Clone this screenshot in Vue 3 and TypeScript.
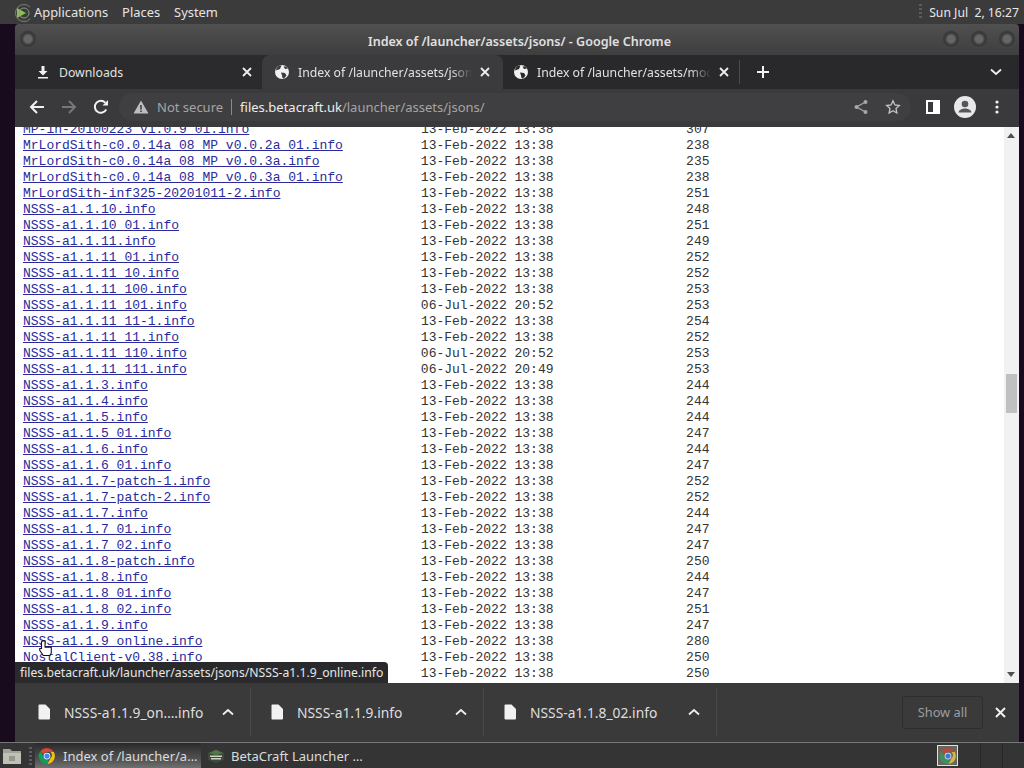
<script setup lang="ts">
interface Row { name: string; date?: string; size: number }

const base = '13-Feb-2022 13:38'
const clock = 'Sun Jul  2, 16:27'
const rows: Row[] = [
  { name: 'MP-in-20100223_v1.0.9_01.info', size: 307 },
  { name: 'MrLordSith-c0.0.14a_08_MP_v0.0.2a_01.info', size: 238 },
  { name: 'MrLordSith-c0.0.14a_08_MP_v0.0.3a.info', size: 235 },
  { name: 'MrLordSith-c0.0.14a_08_MP_v0.0.3a_01.info', size: 238 },
  { name: 'MrLordSith-inf325-20201011-2.info', size: 251 },
  { name: 'NSSS-a1.1.10.info', size: 248 },
  { name: 'NSSS-a1.1.10_01.info', size: 251 },
  { name: 'NSSS-a1.1.11.info', size: 249 },
  { name: 'NSSS-a1.1.11_01.info', size: 252 },
  { name: 'NSSS-a1.1.11_10.info', size: 252 },
  { name: 'NSSS-a1.1.11_100.info', size: 253 },
  { name: 'NSSS-a1.1.11_101.info', date: '06-Jul-2022 20:52', size: 253 },
  { name: 'NSSS-a1.1.11_11-1.info', size: 254 },
  { name: 'NSSS-a1.1.11_11.info', size: 252 },
  { name: 'NSSS-a1.1.11_110.info', date: '06-Jul-2022 20:52', size: 253 },
  { name: 'NSSS-a1.1.11_111.info', date: '06-Jul-2022 20:49', size: 253 },
  { name: 'NSSS-a1.1.3.info', size: 244 },
  { name: 'NSSS-a1.1.4.info', size: 244 },
  { name: 'NSSS-a1.1.5.info', size: 244 },
  { name: 'NSSS-a1.1.5_01.info', size: 247 },
  { name: 'NSSS-a1.1.6.info', size: 244 },
  { name: 'NSSS-a1.1.6_01.info', size: 247 },
  { name: 'NSSS-a1.1.7-patch-1.info', size: 252 },
  { name: 'NSSS-a1.1.7-patch-2.info', size: 252 },
  { name: 'NSSS-a1.1.7.info', size: 244 },
  { name: 'NSSS-a1.1.7_01.info', size: 247 },
  { name: 'NSSS-a1.1.7_02.info', size: 247 },
  { name: 'NSSS-a1.1.8-patch.info', size: 250 },
  { name: 'NSSS-a1.1.8.info', size: 244 },
  { name: 'NSSS-a1.1.8_01.info', size: 247 },
  { name: 'NSSS-a1.1.8_02.info', size: 251 },
  { name: 'NSSS-a1.1.9.info', size: 247 },
  { name: 'NSSS-a1.1.9_online.info', size: 280 },
  { name: 'NostalClient-v0.38.info', size: 250 },
  { name: '', size: 250 },
]

function rest(r: Row): string {
  const pad = ' '.repeat(51 - r.name.length)
  return pad + (r.date ?? base) + String(r.size).padStart(20, ' ')
}

const downloads = ['NSSS-a1.1.9_on….info', 'NSSS-a1.1.9.info', 'NSSS-a1.1.8_02.info']
</script>

<template>
  <div class="desktop">
    <header class="panel">
      <svg class="menu-logo" width="22" height="22" viewBox="0 0 22 22">
        <path d="M9 7 18 12 9 17Z" fill="#8cc152" />
        <circle cx="16" cy="12" r="5" fill="none" stroke="#8f9a80" stroke-width="1" />
        <circle cx="16" cy="12" r="8.500" fill="none" stroke="#7b8270" stroke-width="1" />
      </svg>
      <span class="panel-item first">Applications</span>
      <span class="panel-item">Places</span>
      <span class="panel-item">System</span>
      <span class="spacer"></span>
      <span class="handle"></span>
      <span class="clock">{{ clock }}</span>
    </header>

    <div class="window-area">
      <main class="window">
        <div class="titlebar">
          <span class="wm-btn"></span>
          <span class="title">Index of /launcher/assets/jsons/ - Google Chrome</span>
          <div class="wm-group">
            <span class="wm-btn"></span>
            <span class="wm-btn"></span>
            <span class="wm-btn"></span>
          </div>
        </div>

        <div class="tabstrip">
          <div class="tab tab-dl">
            <svg class="tab-icon" width="16" height="16" viewBox="0 0 16 16">
              <path d="M6.500 2h3v5h3L8 11.500 3.500 7h3ZM3 13h10v1.500H3Z" fill="#f1f1f1" />
            </svg>
            <span class="tab-label">Downloads</span>
            <svg class="tab-x" width="10" height="10" viewBox="0 0 10 10"><path d="M1 1 9 9M9 1 1 9" stroke="#eee" stroke-width="1.800" /></svg>
          </div>
          <div class="tab tab-active">
            <svg class="tab-icon" width="16" height="16" viewBox="0 0 16 16">
              <circle cx="8" cy="8" r="7" fill="#f1f1f1" />
              <path d="M2 6.500 6 5l1.500-3.500L5 1.500 2.500 4ZM7 8.500l4 .5 1.500 2.500L10 14.500 8.500 14 8 11.500ZM9.500 2.500 11 5l3-.5L12 2.500Z" fill="#3b3b3d" />
            </svg>
            <span class="tab-label fade">Index of /launcher/assets/jsons/</span>
            <svg class="tab-x" width="10" height="10" viewBox="0 0 10 10"><path d="M1 1 9 9M9 1 1 9" stroke="#eee" stroke-width="1.800" /></svg>
          </div>
          <div class="tab tab-third">
            <svg class="tab-icon" width="16" height="16" viewBox="0 0 16 16">
              <circle cx="8" cy="8" r="7" fill="#f1f1f1" />
              <path d="M2 6.500 6 5l1.500-3.500L5 1.500 2.500 4ZM7 8.500l4 .5 1.500 2.500L10 14.500 8.500 14 8 11.500ZM9.500 2.500 11 5l3-.5L12 2.500Z" fill="#29292b" />
            </svg>
            <span class="tab-label fade">Index of /launcher/assets/mods/</span>
            <svg class="tab-x" width="10" height="10" viewBox="0 0 10 10"><path d="M1 1 9 9M9 1 1 9" stroke="#eee" stroke-width="1.800" /></svg>
          </div>
          <svg class="tab-plus" width="12" height="12" viewBox="0 0 12 12"><path d="M6 0v12M0 6h12" stroke="#f1f1f1" stroke-width="2" /></svg>
          <span class="spacer"></span>
          <svg class="tab-chev" width="12" height="8" viewBox="0 0 12 8"><path d="M1 1.500 6 6l5-4.500" fill="none" stroke="#eee" stroke-width="1.800" /></svg>
        </div>

        <div class="toolbar">
          <svg class="nav" width="16" height="16" viewBox="0 0 16 16"><path d="M15 8H2M8 2 2 8l6 6" fill="none" stroke="#f1f1f1" stroke-width="2" /></svg>
          <svg class="nav" width="16" height="16" viewBox="0 0 16 16"><path d="M1 8h13M8 2l6 6-6 6" fill="none" stroke="#77777a" stroke-width="2" /></svg>
          <svg class="nav" width="16" height="16" viewBox="0 0 16 16"><path d="M13.200 10.500A6 6 0 1 1 12.300 3.700" fill="none" stroke="#f1f1f1" stroke-width="2" /><path d="M9.500 6.500h5.500V1Z" fill="#f1f1f1" /></svg>
          <div class="omnibox">
            <svg width="16" height="14" viewBox="0 0 16 14"><path d="M8 .5 15.500 13.500H.5ZM7.200 5v4.500h1.600V5ZM7.200 10.500V12h1.600v-1.500Z" fill="#bdbdc0" fill-rule="evenodd" /></svg>
            <span class="not-secure">Not secure</span>
            <span class="omni-sep"></span>
            <span class="url"><b>files.betacraft.uk</b>/launcher/assets/jsons/</span>
            <span class="spacer"></span>
            <svg class="omni-icon" width="16" height="16" viewBox="0 0 16 16"><path d="M12.500 3 3.500 8l9 5" fill="none" stroke="#a8a8aa" stroke-width="1.300" /><circle cx="12.500" cy="3" r="2" fill="#a8a8aa" /><circle cx="3.500" cy="8" r="2" fill="#a8a8aa" /><circle cx="12.500" cy="13" r="2" fill="#a8a8aa" /></svg>
            <svg class="omni-icon" width="16" height="16" viewBox="0 0 16 16"><path d="M8 1.800 9.900 6l4.400.5-3.300 3 .9 4.500L8 11.700 4.100 14l.9-4.500-3.300-3L6.100 6Z" fill="none" stroke="#c4c4c6" stroke-width="1.300" /></svg>
          </div>
          <span class="side-panel"></span>
          <svg class="avatar" width="22" height="22" viewBox="0 0 22 22"><circle cx="11" cy="11" r="11" fill="#e8e8ea" /><circle cx="11" cy="8" r="3.300" fill="#55565a" /><path d="M4.500 16.500c.5-3 4-4 6.500-4s6 1 6.500 4Z" fill="#55565a" /></svg>
          <svg class="dots" width="4" height="14" viewBox="0 0 4 14"><circle cx="2" cy="2" r="1.600" fill="#f1f1f1" /><circle cx="2" cy="7" r="1.600" fill="#f1f1f1" /><circle cx="2" cy="12" r="1.600" fill="#f1f1f1" /></svg>
        </div>

        <section class="page">
          <div class="listing">
            <div v-for="(r, i) in rows" :key="i" class="row"><a class="file" href="#">{{ r.name }}</a>{{ rest(r) }}</div>
          </div>
          <div class="scrollbar">
            <span class="arrow up"></span>
            <span class="thumb"></span>
            <span class="arrow down"></span>
          </div>
          <div class="status">files.betacraft.uk/launcher/assets/jsons/NSSS-a1.1.9_online.info</div>
          <svg class="cursor" width="15" height="16" viewBox="0 0 16 18">
            <path d="M5 1h2.500v7h7v6.500l-1.500 3H5.500L1.500 11.500V9.500h2V2Z" fill="#fff" stroke="#111" stroke-width="1.200" />
          </svg>
        </section>

        <footer class="downloads">
          <div v-for="d in downloads" :key="d" class="dl-item">
            <svg width="14" height="16" viewBox="0 0 14 16"><path d="M2.500 .5h6l4.500 4.500v9.500a1 1 0 0 1-1 1h-9.500a1 1 0 0 1-1-1v-13a1 1 0 0 1 1-1Z" fill="#f1f1f1" /></svg>
            <span class="dl-name">{{ d }}</span>
            <span class="spacer"></span>
            <svg width="12" height="8" viewBox="0 0 12 8"><path d="M1 6.500 6 2l5 4.500" fill="none" stroke="#eee" stroke-width="1.800" /></svg>
          </div>
          <span class="spacer"></span>
          <span class="show-all">Show all</span>
          <svg class="dl-close" width="11" height="11" viewBox="0 0 11 11"><path d="M1 1 10 10M10 1 1 10" stroke="#f1f1f1" stroke-width="2" /></svg>
        </footer>
      </main>
    </div>

    <nav class="taskbar">
      <svg class="fm" width="20" height="18" viewBox="0 0 20 18">
        <path d="M1 2h7l2 2h9v13H1Z" fill="#a3a498" />
        <path d="M1 6h18v11H1Z" fill="#c0c1b6" />
        <rect x="7" y="9" width="6" height="5" fill="#95968c" />
      </svg>
      <span class="handle task-handle"></span>
      <div class="task active-task">
        <svg width="18" height="18" viewBox="0 0 48 48">
          <path d="M24 3a21 21 0 0 1 18.200 10.500H24a10.500 10.500 0 0 0-9.600 6.300L6.500 11A21 21 0 0 1 24 3Z" fill="#db4437" />
          <path d="M42.200 13.500A21 21 0 0 1 25 45l9-15.500a10.500 10.500 0 0 0-1-16Z" fill="#f4c20d" />
          <path d="M25 45A21 21 0 0 1 6.500 11l8.900 15.500A10.500 10.500 0 0 0 28 34Z" fill="#0f9d58" />
          <circle cx="24" cy="24" r="9" fill="#fff" />
          <circle cx="24" cy="24" r="7" fill="#4285f4" />
        </svg>
        <span>Index of /launcher/a…</span>
      </div>
      <div class="task beta-task">
        <svg width="18" height="14" viewBox="0 0 18 14">
          <path d="M1 4 9 0l8 4v7l-8 3-8-3Z" fill="#3d4a3a" />
          <path d="M2 4 9 1l7 3-7 2Z" fill="#4f7a45" />
          <rect x="3" y="6.500" width="12" height="1.500" fill="#d0d0c8" />
          <rect x="4" y="9" width="10" height="1.500" fill="#d0d0c8" />
        </svg>
        <span>BetaCraft Launcher …</span>
      </div>
      <span class="spacer"></span>
      <span class="thumb-chrome">
        <svg width="18" height="18" viewBox="0 0 48 48">
          <path d="M24 3a21 21 0 0 1 18.200 10.500H24a10.500 10.500 0 0 0-9.600 6.300L6.500 11A21 21 0 0 1 24 3Z" fill="#b9473c" />
          <path d="M42.200 13.500A21 21 0 0 1 25 45l9-15.500a10.500 10.500 0 0 0-1-16Z" fill="#d7b446" />
          <path d="M25 45A21 21 0 0 1 6.500 11l8.900 15.500A10.500 10.500 0 0 0 28 34Z" fill="#3f8f5f" />
          <circle cx="24" cy="24" r="9" fill="#e8e8e8" />
          <circle cx="24" cy="24" r="7" fill="#3f78d8" />
        </svg>
      </span>
      <span class="workspace"></span>
      <span class="workspace"></span>
    </nav>
  </div>
</template>

<style>
html, body { margin: 0; background: #170b1d; }
</style>

<style scoped>
.desktop {
  width: 1024px;
  height: 768px;
  display: flex;
  flex-direction: column;
  overflow: hidden;
  background: #170b1d;
  font-family: "Noto Sans", sans-serif;
  color: #e6e6e6;
}
.spacer { flex: 1; }

.panel {
  height: 24px;
  flex: none;
  display: flex;
  align-items: center;
  background: #3b3b3c;
  font-size: 12.900px;
}
.menu-logo { margin-left: 8px; flex: none; }
.panel-item { margin-left: 14px; color: #e4e4e4; }
.panel-item.first { margin-left: 4px; }
.handle {
  width: 3px;
  height: 16px;
  background: repeating-linear-gradient(#5c5c5c 0 2px, transparent 2px 4px);
}
.clock { margin: 0 5px 0 7px; white-space: pre; color: #e8e8e8; font-size: 12.200px; }

.window-area {
  flex: 1;
  min-height: 0;
  display: flex;
  padding: 0 5px 0 15px;
}
.window {
  flex: 1;
  min-width: 0;
  display: flex;
  flex-direction: column;
}

.titlebar {
  height: 31px;
  flex: none;
  box-sizing: border-box;
  display: flex;
  align-items: center;
  position: relative;
  justify-content: space-between;
  padding: 0 3px 2px 4px;
  background: linear-gradient(#505051, #3e3e3f);
  border-radius: 4px 4px 0 0;
}
.title {
  position: absolute;
  left: 5px;
  right: 0;
  top: 0;
  line-height: 35px;
  text-align: center;
  font-size: 12.550px;
  font-weight: 600;
  color: #e0e0e0;
}
.wm-group { display: flex; gap: 10px; position: relative; }
.wm-btn {
  width: 18px;
  height: 18px;
  border-radius: 50%;
  background: radial-gradient(circle, #666 0 3.500px, #3a3a3a 6px 7.500px, #4a4a4a 9px);
  display: block;
}

.tabstrip {
  height: 34px;
  flex: none;
  display: flex;
  align-items: center;
  background: #29292b;
  font-size: 12.250px;
}
.tab {
  height: 34px;
  display: flex;
  align-items: center;
  box-sizing: border-box;
  flex: none;
}
.tab-dl { width: 247px; padding: 0 10px 0 20px; background: #2b2b2d; border-radius: 0 0 8px 0; }
.tab-active { width: 241px; padding: 0 13px 0 12px; background: #3b3b3d; border-radius: 8px 8px 0 0; }
.tab-third { width: 237px; height: 24px; padding: 0 10px 0 10px; border-right: 1px solid #4a4a4c; }
.tab-icon { flex: none; }
.tab-label { margin-left: 8px; color: #e2e2e2; flex: 1; white-space: nowrap; overflow: hidden; min-width: 0; }
.fade { -webkit-mask-image: linear-gradient(90deg, #000 88%, transparent); mask-image: linear-gradient(90deg, #000 88%, transparent); }
.tab-x { flex: none; margin-left: 8px; }
.tab-plus { margin-left: 17px; flex: none; }
.tab-chev { margin-right: 17px; flex: none; }

.toolbar {
  height: 38px;
  flex: none;
  box-sizing: border-box;
  display: flex;
  align-items: center;
  background: #3a3a3c;
  padding: 0 0 2px 14px;
}
.nav { flex: none; margin-right: 16px; }
.omnibox {
  margin-left: -6px;
  width: 792px;
  height: 28px;
  box-sizing: border-box;
  padding: 0 10px 0 14px;
  border-radius: 14px;
  background: #3f3f41;
  display: flex;
  align-items: center;
  font-size: 13px;
  flex: none;
}
.not-secure { margin-left: 8px; color: #a5a5a7; }
.omni-sep { width: 1px; height: 16px; background: #8a8a8c; margin: 0 8px; }
.url { color: #a5a5a7; white-space: nowrap; }
.url b { font-weight: 400; color: #ececec; }
.omni-icon { flex: none; margin-left: 16px; }
.side-panel {
  flex: none;
  width: 14px;
  height: 14px;
  margin-left: 15px;
  box-sizing: border-box;
  border: 2px solid #fff;
  border-right-width: 7px;
  background: #3a3a3c;
}
.avatar { flex: none; margin-left: 14px; }
.dots { flex: none; margin-left: 19px; }

.page {
  flex: 1;
  min-height: 0;
  position: relative;
  overflow: hidden;
  background: #fff;
}
.listing {
  margin-top: -5px;
  padding-left: 8px;
  font-family: "Liberation Mono", monospace;
  font-size: 13px;
  line-height: 16px;
  color: #333;
}
.row { white-space: pre; height: 16px; }
.file { color: #2a2a9c; text-decoration: underline; }
.scrollbar {
  position: absolute;
  right: 0;
  top: 0;
  bottom: 0;
  width: 15px;
  background: #f1f1f1;
}
.thumb { position: absolute; left: 2px; right: 2px; top: 247px; height: 39px; background: #c0c0c0; }
.arrow { position: absolute; left: 3px; border: 4px solid transparent; }
.arrow.up { top: 6px; border-bottom: 5px solid #505050; border-top-width: 0; }
.arrow.down { bottom: 6px; border-top: 5px solid #505050; border-bottom-width: 0; }
.status {
  position: absolute;
  left: 0;
  bottom: 0;
  height: 21px;
  padding: 0 5px;
  line-height: 21px;
  font-size: 12.200px;
  color: #e6e6e6;
  background: #2a2a2c;
  border-radius: 0 4px 0 0;
  white-space: nowrap;
}
.cursor { position: absolute; left: 23px; top: 513px; }

.downloads {
  height: 59px;
  flex: none;
  box-sizing: border-box;
  display: flex;
  align-items: center;
  background: #3a3a3b;
  padding: 0 0 1px 3px;
  font-size: 13.800px;
}
.dl-item {
  width: 233px;
  height: 48px;
  box-sizing: border-box;
  flex: none;
  display: flex;
  align-items: center;
  padding: 0 16px 0 19px;
  border-right: 1px solid #4a4a4b;
}
.dl-item svg { flex: none; }
.dl-name { margin-left: 13px; color: #dfdfdf; white-space: nowrap; }
.show-all {
  width: 81px;
  height: 33px;
  line-height: 31px;
  box-sizing: border-box;
  text-align: center;
  border: 1px solid #2e2e2f;
  border-radius: 3px;
  color: #9d9d9f;
  font-size: 12.800px;
  flex: none;
}
.dl-close { margin: 0 13px 0 12px; flex: none; }

.taskbar {
  height: 26px;
  flex: none;
  box-sizing: border-box;
  border-top: 1px solid #77777a;
  display: flex;
  align-items: center;
  background: #343435;
  font-size: 13px;
}
.fm { flex: none; margin-left: 2px; }
.task-handle { margin-left: 7px; height: 18px; flex: none; }
.task {
  height: 25px;
  display: flex;
  align-items: center;
  color: #dcdcdc;
  white-space: nowrap;
  flex: none;
}
.active-task {
  width: 166px;
  box-sizing: border-box;
  margin-left: 3px;
  padding-left: 3px;
  gap: 7px;
  background: linear-gradient(#2a2a2a, #555 70%, #707070);
}
.beta-task { margin-left: 2px; padding-left: 4px; gap: 6px; }
.thumb-chrome {
  width: 21px;
  height: 21px;
  flex: none;
  box-sizing: border-box;
  border: 1px solid #e0e0e0;
  background: #66675f;
  display: flex;
  align-items: center;
  justify-content: center;
  margin-right: 22px;
}
.workspace {
  width: 22px;
  height: 25px;
  flex: none;
  box-sizing: border-box;
  border-left: 1px solid #272728;
}
</style>
